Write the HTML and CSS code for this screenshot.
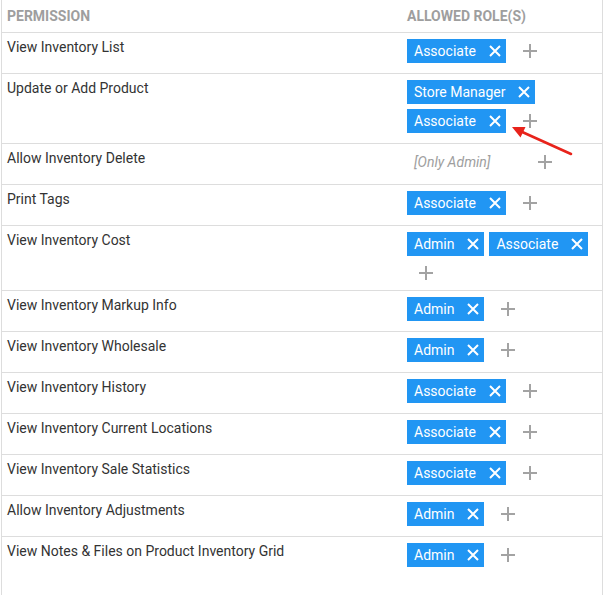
FILE: index.html
```html
<!DOCTYPE html>
<html>
<head>
<meta charset="utf-8">
<link rel="stylesheet" href="styles.css">
</head>
<body>
<div class="table">
  <div class="row head">
    <div class="cell-name">Permission</div>
    <div class="cell-roles-head">Allowed Role(s)</div>
  </div>

  <div class="row">
    <div class="cell-name">View Inventory List</div>
    <div class="cell-roles">
      <span class="chip">Associate<svg class="x" viewBox="0 0 12 12"><path d="M1 1L11 11M11 1L1 11"/></svg></span>
      <span class="add"><svg viewBox="0 0 14 14"><path d="M7 0V14M0 7H14"/></svg></span>
    </div>
  </div>

  <div class="row">
    <div class="cell-name">Update or Add Product</div>
    <div class="cell-roles">
      <span class="chip">Store Manager<svg class="x" viewBox="0 0 12 12"><path d="M1 1L11 11M11 1L1 11"/></svg></span>
      <span class="chip">Associate<svg class="x" viewBox="0 0 12 12"><path d="M1 1L11 11M11 1L1 11"/></svg></span>
      <span class="add"><svg viewBox="0 0 14 14"><path d="M7 0V14M0 7H14"/></svg></span>
    </div>
  </div>

  <div class="row">
    <div class="cell-name">Allow Inventory Delete</div>
    <div class="cell-roles">
      <span class="only">[Only Admin]</span>
      <span class="add"><svg viewBox="0 0 14 14"><path d="M7 0V14M0 7H14"/></svg></span>
    </div>
  </div>

  <div class="row">
    <div class="cell-name">Print Tags</div>
    <div class="cell-roles">
      <span class="chip">Associate<svg class="x" viewBox="0 0 12 12"><path d="M1 1L11 11M11 1L1 11"/></svg></span>
      <span class="add"><svg viewBox="0 0 14 14"><path d="M7 0V14M0 7H14"/></svg></span>
    </div>
  </div>

  <div class="row">
    <div class="cell-name">View Inventory Cost</div>
    <div class="cell-roles">
      <span class="chip">Admin<svg class="x" viewBox="0 0 12 12"><path d="M1 1L11 11M11 1L1 11"/></svg></span>
      <span class="chip">Associate<svg class="x" viewBox="0 0 12 12"><path d="M1 1L11 11M11 1L1 11"/></svg></span>
      <span class="add"><svg viewBox="0 0 14 14"><path d="M7 0V14M0 7H14"/></svg></span>
    </div>
  </div>

  <div class="row">
    <div class="cell-name">View Inventory Markup Info</div>
    <div class="cell-roles">
      <span class="chip">Admin<svg class="x" viewBox="0 0 12 12"><path d="M1 1L11 11M11 1L1 11"/></svg></span>
      <span class="add"><svg viewBox="0 0 14 14"><path d="M7 0V14M0 7H14"/></svg></span>
    </div>
  </div>

  <div class="row">
    <div class="cell-name">View Inventory Wholesale</div>
    <div class="cell-roles">
      <span class="chip">Admin<svg class="x" viewBox="0 0 12 12"><path d="M1 1L11 11M11 1L1 11"/></svg></span>
      <span class="add"><svg viewBox="0 0 14 14"><path d="M7 0V14M0 7H14"/></svg></span>
    </div>
  </div>

  <div class="row">
    <div class="cell-name">View Inventory History</div>
    <div class="cell-roles">
      <span class="chip">Associate<svg class="x" viewBox="0 0 12 12"><path d="M1 1L11 11M11 1L1 11"/></svg></span>
      <span class="add"><svg viewBox="0 0 14 14"><path d="M7 0V14M0 7H14"/></svg></span>
    </div>
  </div>

  <div class="row">
    <div class="cell-name">View Inventory Current Locations</div>
    <div class="cell-roles">
      <span class="chip">Associate<svg class="x" viewBox="0 0 12 12"><path d="M1 1L11 11M11 1L1 11"/></svg></span>
      <span class="add"><svg viewBox="0 0 14 14"><path d="M7 0V14M0 7H14"/></svg></span>
    </div>
  </div>

  <div class="row">
    <div class="cell-name">View Inventory Sale Statistics</div>
    <div class="cell-roles">
      <span class="chip">Associate<svg class="x" viewBox="0 0 12 12"><path d="M1 1L11 11M11 1L1 11"/></svg></span>
      <span class="add"><svg viewBox="0 0 14 14"><path d="M7 0V14M0 7H14"/></svg></span>
    </div>
  </div>

  <div class="row">
    <div class="cell-name">Allow Inventory Adjustments</div>
    <div class="cell-roles">
      <span class="chip">Admin<svg class="x" viewBox="0 0 12 12"><path d="M1 1L11 11M11 1L1 11"/></svg></span>
      <span class="add"><svg viewBox="0 0 14 14"><path d="M7 0V14M0 7H14"/></svg></span>
    </div>
  </div>

  <div class="row last">
    <div class="cell-name">View Notes &amp; Files on Product Inventory Grid</div>
    <div class="cell-roles">
      <span class="chip">Admin<svg class="x" viewBox="0 0 12 12"><path d="M1 1L11 11M11 1L1 11"/></svg></span>
      <span class="add"><svg viewBox="0 0 14 14"><path d="M7 0V14M0 7H14"/></svg></span>
    </div>
  </div>
</div>

<svg class="arrow" width="604" height="595" viewBox="0 0 604 595">
  <line x1="571" y1="154" x2="520" y2="131" stroke="#e8231b" stroke-width="2.6" stroke-linecap="round"/>
  <polygon points="512,127 525.5,127 520.5,137.5" fill="#e8231b"/>
</svg>
</body>
</html>
```

FILE: styles.css
```css
html, body {
  margin: 0;
  padding: 0;
  background: #ffffff;
}

body {
  position: relative;
  width: 604px;
  height: 595px;
  overflow: hidden;
  font-family: Roboto, "Liberation Sans", sans-serif;
  font-size: 14px;
  color: #333333;
}

.table {
  margin-left: 1px;
  width: 600px;
  min-height: 595px;
  border-left: 1px solid #dddddd;
  border-right: 1px solid #dddddd;
}

.row {
  display: grid;
  grid-template-columns: 398px 1fr;
  border-bottom: 1px solid #dddddd;
}

.row.last {
  border-bottom: none;
}

.cell-name {
  padding: 6px 5px 5px 5px;
  line-height: 17px;
}

.head .cell-name,
.cell-roles-head {
  padding: 8px 5px 8px 5px;
  line-height: 16px;
  font-size: 14px;
  font-weight: 700;
  color: #9e9e9e;
  text-transform: uppercase;
}

.cell-roles-head {
  padding-left: 7px;
}

.cell-roles {
  display: flex;
  flex-wrap: wrap;
  align-items: flex-start;
  padding: 6px 0 5px 7px;
}

.chip {
  display: inline-flex;
  align-items: center;
  height: 24px;
  padding: 0 5px 0 7px;
  margin: 0 5px 5px 0;
  background: #2196f3;
  color: #ffffff;
  font-size: 14px;
  line-height: 24px;
  white-space: nowrap;
}

.chip .x {
  width: 12px;
  height: 12px;
  margin-left: 13px;
  fill: none;
  stroke: #ffffff;
  stroke-width: 2;
}

.only {
  display: inline-block;
  height: 24px;
  line-height: 24px;
  padding: 0 31px 0 7px;
  margin: 0 5px 5px 0;
  font-style: italic;
  color: #9e9e9e;
}

.add {
  display: inline-flex;
  align-items: center;
  justify-content: center;
  width: 24px;
  height: 24px;
  margin-left: 7px;
}

.add svg {
  width: 14px;
  height: 14px;
  fill: none;
  stroke: #a3a3a3;
  stroke-width: 2;
}

.arrow {
  position: absolute;
  left: 0;
  top: 0;
  pointer-events: none;
}
```
